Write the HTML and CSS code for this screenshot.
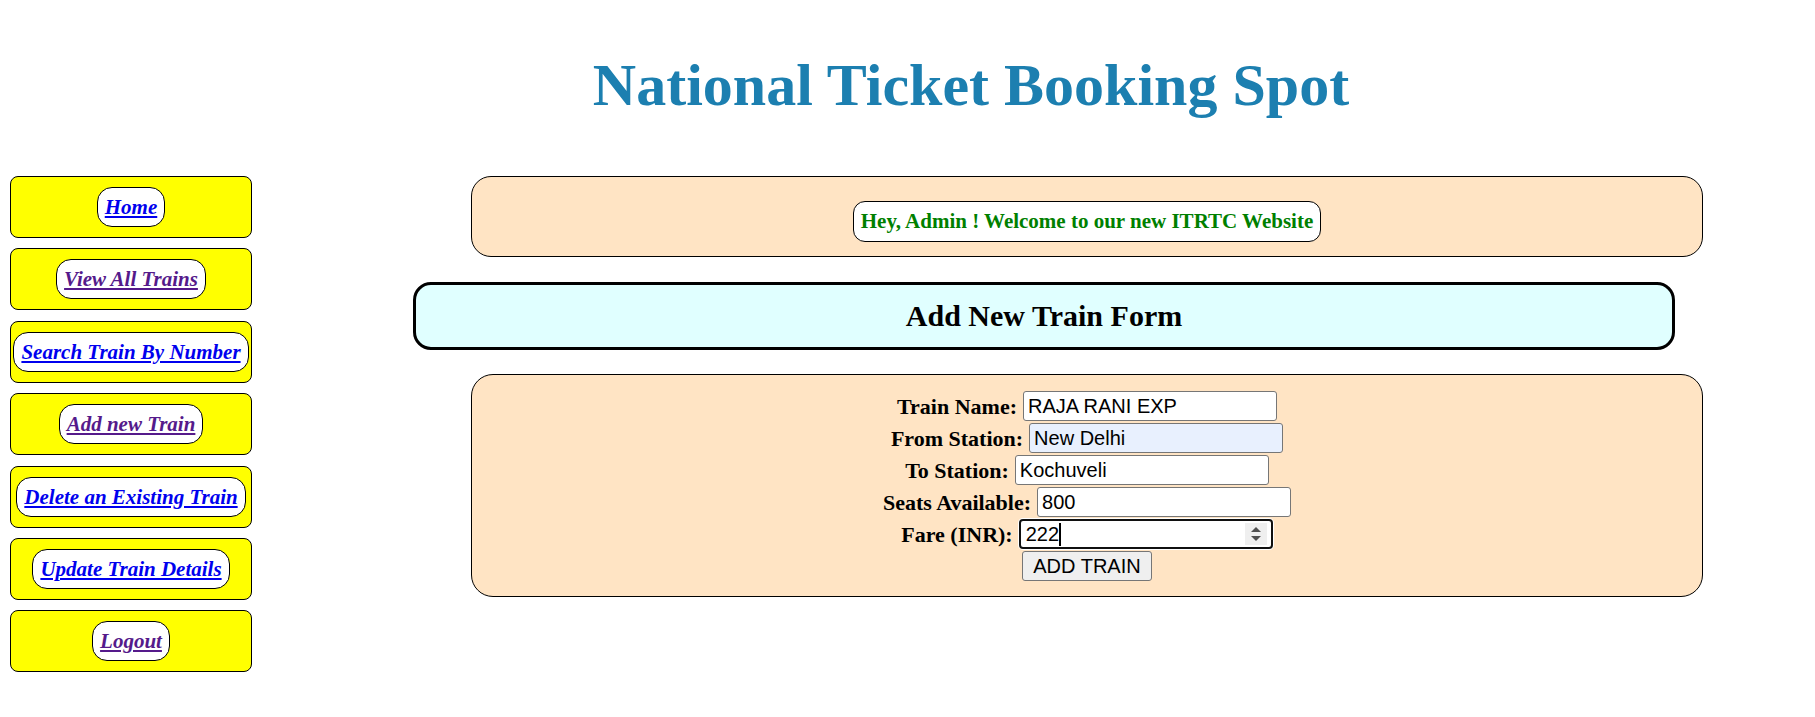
FILE: index.html
```html
<!DOCTYPE html>
<html lang="en">
<head>
<meta charset="utf-8">
<title>National Ticket Booking Spot</title>
<link rel="stylesheet" href="styles.css">
</head>
<body>
<header class="top">
  <h1 class="title">National Ticket Booking Spot</h1>
</header>
<div class="layout">
  <nav class="sidebar">
    <div class="nav-box"><a class="nav-link link-new" href="#">Home</a></div>
    <div class="nav-box"><a class="nav-link link-visited" href="#">View All Trains</a></div>
    <div class="nav-box"><a class="nav-link link-new" href="#">Search Train By Number</a></div>
    <div class="nav-box"><a class="nav-link link-visited" href="#">Add new Train</a></div>
    <div class="nav-box"><a class="nav-link link-new" href="#">Delete an Existing Train</a></div>
    <div class="nav-box"><a class="nav-link link-new" href="#">Update Train Details</a></div>
    <div class="nav-box"><a class="nav-link link-visited" href="#">Logout</a></div>
  </nav>
  <main class="main">
    <div class="welcome">
      <span class="welcome-pill">Hey, Admin ! Welcome to our new ITRTC Website</span>
    </div>
    <h2 class="form-heading">Add New Train Form</h2>
    <form class="train-form">
      <div class="form-row">
        <label class="field-label">Train Name:</label>
        <input class="field-input" type="text" value="RAJA RANI EXP">
      </div>
      <div class="form-row">
        <label class="field-label">From Station:</label>
        <input class="field-input autofilled" type="text" value="New Delhi">
      </div>
      <div class="form-row">
        <label class="field-label">To Station:</label>
        <input class="field-input" type="text" value="Kochuveli">
      </div>
      <div class="form-row">
        <label class="field-label">Seats Available:</label>
        <input class="field-input" type="text" value="800">
      </div>
      <div class="form-row">
        <label class="field-label">Fare (INR):</label>
        <div class="fake-input">
          <span class="fake-value">222</span><span class="caret"></span>
          <span class="spinner">
            <svg width="22" height="22" viewBox="0 0 22 22" aria-hidden="true">
              <path d="M6 9 L11 4 L16 9 Z" fill="#505050"/>
              <path d="M6 13 L11 18 L16 13 Z" fill="#505050"/>
            </svg>
          </span>
        </div>
      </div>
      <div class="form-row">
        <button class="submit-btn" type="button">ADD TRAIN</button>
      </div>
    </form>
  </main>
</div>
</body>
</html>
```

FILE: styles.css
```css
body {
  margin: 8px;
  font-family: "Liberation Serif", "Times New Roman", serif;
  color: #000;
  background: #fff;
}

.top {
  padding: 43px 0 56px 127px;
  text-align: center;
}

.title {
  margin: 0;
  font-size: 60px;
  line-height: 69px;
  font-weight: bold;
  color: #1c7fb0;
}

.layout {
  display: flex;
  align-items: flex-start;
}

.sidebar {
  width: 242px;
  margin-left: 2px;
  display: flex;
  flex-direction: column;
  gap: 10.4px;
  flex: none;
}

.nav-box {
  box-sizing: border-box;
  height: 62px;
  padding: 0 1px;
  border: 1px solid #000;
  border-radius: 8px;
  background: #ffff00;
  display: flex;
  justify-content: center;
  align-items: center;
}

.nav-link {
  display: inline-block;
  padding: 8px 7px;
  line-height: 22px;
  font-size: 21px;
  font-weight: bold;
  font-style: italic;
  text-decoration: underline;
  background: #fff;
  border: 1px solid #000;
  border-radius: 15px;
  white-space: nowrap;
}

.link-new { color: #0000ee; }
.link-visited { color: #551a8b; }

.main {
  flex: 1;
  min-width: 0;
}

.welcome {
  margin: 0 104px 0 219px;
  padding: 24px 19px 14px;
  border: 1px solid #000;
  border-radius: 20px;
  background: #ffe4c4;
  display: flex;
  justify-content: center;
}

.welcome-pill {
  display: inline-block;
  padding: 8px 7px;
  line-height: 23px;
  font-size: 21px;
  font-weight: bold;
  color: #008000;
  background: #fff;
  border: 1px solid #000;
  border-radius: 12px;
}

.form-heading {
  margin: 25px 132px 0 161px;
  padding: 14px;
  line-height: 34px;
  font-size: 30px;
  font-weight: bold;
  text-align: center;
  background: #e0ffff;
  border: 3px solid #000;
  border-radius: 18px;
}

.train-form {
  margin: 24px 104px 0 219px;
  padding: 15px 10px 14px;
  border: 1px solid #000;
  border-radius: 22px;
  background: #ffe4c4;
}

.form-row {
  height: 32px;
  display: flex;
  justify-content: center;
  align-items: center;
  gap: 6px;
}

.field-label {
  font-size: 22px;
  font-weight: bold;
  line-height: 25px;
}

.field-input {
  box-sizing: border-box;
  width: 254px;
  height: 30px;
  margin: 0;
  padding: 0 4px;
  border: 1px solid #767676;
  border-radius: 3px;
  background: #fff;
  font-family: "Liberation Sans", Arial, sans-serif;
  font-size: 20px;
  color: #000;
}

.autofilled {
  background: #e8f0fe;
}

.fake-input {
  box-sizing: border-box;
  width: 254px;
  height: 30px;
  padding: 0 4px 0 5px;
  border: 2px solid #101010;
  border-radius: 4px;
  box-shadow: 0 0 0 1px #fff;
  background: #fff;
  display: flex;
  align-items: center;
  font-family: "Liberation Sans", Arial, sans-serif;
  font-size: 20px;
}

.fake-value {
  line-height: 24px;
}

.caret {
  width: 2px;
  height: 23px;
  background: #000;
}

.spinner {
  margin-left: auto;
  width: 22px;
  height: 22px;
  background: #efefef;
  display: flex;
}

.submit-btn {
  box-sizing: border-box;
  height: 30px;
  margin: 0;
  padding: 0 10px;
  border: 1px solid #767676;
  border-radius: 3px;
  background: #efefef;
  font-family: "Liberation Sans", Arial, sans-serif;
  font-size: 20px;
  color: #000;
}
```
